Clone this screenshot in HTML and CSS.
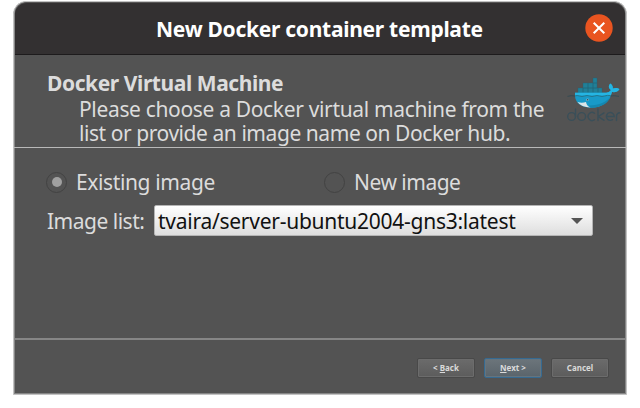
FILE: index.html
```html
<!DOCTYPE html>
<html lang="en">
<head>
<meta charset="utf-8">
<title>New Docker container template</title>
<link rel="stylesheet" href="styles.css">
</head>
<body>
<div class="window">
  <header class="titlebar">
    <h1 class="title">New Docker container template</h1>
    <button class="close" aria-label="Close">
      <svg width="28" height="28" viewBox="0 0 28 28"><circle cx="14" cy="14" r="13.7" fill="#e95420"/><path d="M8.7 8.700 19.300 19.300M19.300 8.700 8.700 19.300" stroke="#fff" stroke-width="2" fill="none"/></svg>
    </button>
  </header>
  <section class="intro">
    <div class="intro-text">
      <h2 class="heading">Docker Virtual Machine</h2>
      <p class="desc"><span class="line1">Please choose a Docker virtual machine from the</span> <span class="line2">list or provide an image name on Docker hub.</span></p>
    </div>
    <div class="logo">
      <svg width="54" height="32" viewBox="0 0 54 32">
        <g fill="#207f97" stroke="#266373" stroke-width=".4">
          <path d="M11 11h5v5h-5zM16 11h5v5h-5zM21 11h5v5h-5zM26 11h5v5h-5zM31 11h4v5h-4zM16 6h5v5h-5zM21 6h5v5h-5zM26 6h4v5h-4zM26 1h4v5h-4z"/>
        </g>
        <path d="M8 15.800H37C40 15.800 43 15 44 13C41 11 41.500 8 43.500 6.500C45.500 8 46 10 45.800 11.500C48 10.500 51 10.800 52.500 12C51 14.800 48 15.500 45 15C43 25 35 30.700 24 30.700C12 30.700 7 24 8 15.800Z" fill="#189ac8"/>
        <path d="M8 15.800H37C40 15.800 43 15 44 13C41 11 41.500 8 43.500 6.500C45.500 8 46 10 45.800 11.500C48 10.500 51 10.800 52.500 12C51 14.800 48 15.500 45 15L43.700 18.500H8Z" fill="#25b5e3"/>
        <path d="M24 30.700C35 30.700 41 26 43.700 19.500C39 25 33 28 22 28.500Z" fill="#1488b1"/>
        <path d="M10.500 25C13.500 26 16.500 25.800 19 25C19.500 28 21 29.700 23.500 30.600C17.500 30.300 13 28.500 10.500 25Z" fill="#dce5e7"/>
        <circle cx="20.500" cy="22.800" r="1.300" fill="#7fb5c6"/><circle cx="20.600" cy="22.800" r=".7" fill="#294957"/>
        <path d="M.5 19.400Q4 18.200 8 19M43.500 19Q47 18.200 52 19.400" stroke="#354b52" stroke-width="1" fill="none"/>
        <path d="M8 19Q10 18 12.500 19T17.500 19T22.500 19T27.500 19T32.500 19T37.500 19T43.500 18.500" stroke="#247186" stroke-width=".9" fill="none"/>
      </svg>
      <svg class="wordmark" width="54" height="14" viewBox="0 0 54 14" aria-label="docker" fill="none" stroke="#3a4f59" stroke-width="1.400" stroke-linecap="round">
        <circle cx="4.600" cy="8.500" r="3.900"/><path d="M8.500 1V8.500"/>
        <circle cx="14.700" cy="8.500" r="3.900"/>
        <path d="M27.500 5.300A4 4 0 1 0 27.500 11.700"/>
        <path d="M31 1V12.500M37 4.800 31.500 8.500 37 12.300"/>
        <path d="M39.500 8.500H47.200A3.900 3.900 0 1 0 45.500 11.700"/>
        <path d="M49.500 12.500V8.500Q49.500 4.700 53 4.700"/>
      </svg>
    </div>
  </section>
  <main class="form">
    <div class="radios">
      <label class="option first"><span class="radio checked"></span><span class="existing">Existing image</span></label>
      <label class="option"><span class="radio"></span><span class="new">New image</span></label>
    </div>
    <div class="row">
      <span class="label">Image list:</span>
      <div class="select"><span class="value">tvaira/server-ubuntu2004-gns3:latest</span><span class="arrow"></span></div>
    </div>
  </main>
  <footer class="actions">
    <button class="btn back"><span>&lt; <u>B</u>ack</span></button>
    <button class="btn next"><span><u>N</u>ext &gt;</span></button>
    <button class="btn cancel"><span>Cancel</span></button>
  </footer>
</div>
</body>
</html>
```
FILE: styles.css
```css
* { box-sizing: border-box; }
body {
  margin: 0;
  padding: 1px 0 0 13px;
  height: 408px;
  background: #fff;
  overflow: hidden;
  font-family: "Noto Sans", "Open Sans", sans-serif;
  font-size: 21px;
  line-height: 24px;
  color: #dcdcdc;
}
.window {
  width: 614px;
  height: 394px;
  display: flex;
  flex-direction: column;
  background: #535353;
  border: 1px solid #c2c2c2;
  border-radius: 13px 13px 0 0;
  box-shadow: inset 0 0 0 1px #868686;
  overflow: hidden;
  white-space: nowrap;
}
.titlebar {
  height: 53px;
  flex: none;
  margin: 0 1px;
  border-top: 1px solid #575555;
  border-radius: 12px 12px 0 0;
  border-bottom: 1px solid #1d1b1c;
  background: #333031;
  display: flex;
  align-items: center;
  padding: 0 12px 0 141px;
  justify-content: space-between;
}
h1, h2, p { margin: 0; }
.title { font-size: 21px; font-weight: 700; line-height: 28px; color: #fff; letter-spacing: -0.28px; }
.close { width: 28px; height: 28px; margin-top: -1px; padding: 0; border: 0; background: none; }
.close svg { display: block; }
.intro {
  height: 93px;
  flex: none;
  border-bottom: 1px solid #b9b9b9;
  padding: 15px 5px 0 33px;
  display: flex;
  justify-content: space-between;
}
.heading { font-size: 21px; line-height: 27px; font-weight: 700; letter-spacing: -0.42px; }
.desc { padding-left: 32px; }
.line1, .line2 { display: block; }
.line1 { letter-spacing: -0.34px; }
.line2 { letter-spacing: -0.44px; }
.logo { padding-top: 7px; width: 54px; }
.logo svg { display: block; }
.wordmark { margin-top: -1px; }
.form { height: 192px; flex: none; padding: 21px 33px 0 32px; border-bottom: 2px solid #868686; }
.radios { display: flex; height: 26px; }
.option { display: flex; align-items: center; gap: 9px; }
.option.first { width: 278px; }
.existing { letter-spacing: -0.38px; }
.new { letter-spacing: -0.5px; }
.radio { width: 21px; height: 21px; border: 1px solid #424242; border-radius: 50%; display: grid; place-items: center; }
.checked::after { content: ""; width: 10px; height: 10px; border-radius: 50%; background: #a0a0a0; }
.row { display: flex; margin-top: 10px; align-items: center; }
.label { width: 108px; padding-left: 1px; letter-spacing: -0.5px; }
.select {
  width: 439px;
  height: 31px;
  display: flex;
  align-items: center;
  justify-content: space-between;
  padding: 0 9px 0 3px;
  border: 1px solid #b5b5b5;
  border-radius: 2px;
  background: linear-gradient(#fff, #dedede);
  color: #111;
}
.value { letter-spacing: -0.26px; }
.arrow { border: 6px solid transparent; border-top-color: #555; border-bottom: 0; }
.actions { flex: 1; display: flex; justify-content: flex-end; gap: 9px; padding: 18px 17px 0 0; }
.btn {
  width: 58px;
  height: 20px;
  padding: 0;
  border: 1px solid #494949;
  border-radius: 2px;
  background: linear-gradient(#6b6b6b, #5c5c5c);
  box-shadow: inset 0 0 0 1px #6c6c6c;
  font: 700 8px/16px "Noto Sans", sans-serif;
  color: #dadada;
}
.next { border-color: #366a91; background: linear-gradient(#6c757b, #5a646b); box-shadow: inset 0 0 0 1px #64747f; }
u { text-underline-offset: 1px; text-decoration-thickness: 1px; }
```
